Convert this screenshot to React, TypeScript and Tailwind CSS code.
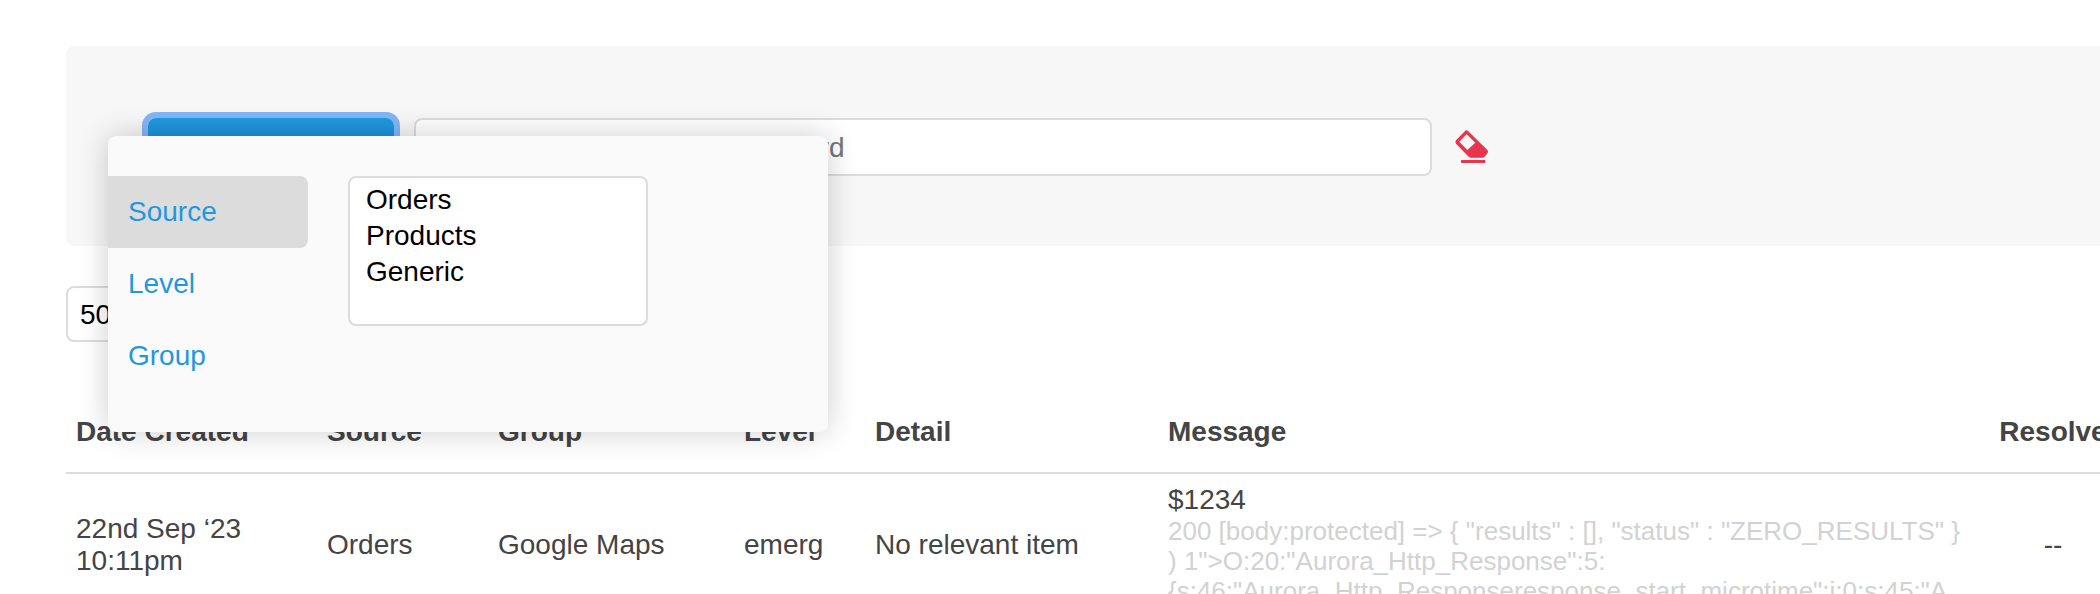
import { useState } from "react";
import clsx from "clsx";

type LogEntry = {
  id: number;
  date: string[];
  source: string;
  group: string;
  level: string;
  detail: string;
  title: string;
  body: string[];
  resolved: string;
};

const filters = [
  { name: "Source", options: ["Orders", "Products", "Generic"] },
  { name: "Level", options: ["emerg", "error", "info"] },
  { name: "Group", options: ["Google Maps"] },
];

const logs: LogEntry[] = [
  {
    id: 1,
    date: ["22nd Sep ‘23", "10:11pm"],
    source: "Orders",
    group: "Google Maps",
    level: "emerg",
    detail: "No relevant item",
    title: "$1234",
    body: [
      '200 [body:protected] => { "results" : [], "status" : "ZERO_RESULTS" }',
      ') 1">O:20:"Aurora_Http_Response":5:',
      '{s:46:"Aurora_Http_Responseresponse_start_microtime";i:0;s:45:"A',
    ],
    resolved: "--",
  },
];

const EraserIcon = () => (
  <svg viewBox="0 0 120 108" className="h-9 w-10" aria-hidden="true">
    <path
      fill="#e8344c"
      fillRule="evenodd"
      d="M39 6Q43 2 48 6L106 63Q110 67 107 72L98 83Q95 86 91 86H57Q53 86 50 83L12 44Q8 39 12 34ZM44 16L22 38L46 63L70 41Z"
    />
    <rect x="27" y="93" width="73" height="9" rx="2" fill="#e8344c" />
  </svg>
);

const FilterMenu = () => {
  const [active, setActive] = useState("Source");
  const current = filters.find((f) => f.name === active) ?? filters[0];

  return (
    <div className="absolute top-[90px] left-[42px] z-10 flex w-[720px] gap-10 rounded-lg bg-[#fafafa] py-10 shadow-[0_0_30px_rgba(0,0,0,0.2)]">
      <nav className="w-[200px]">
        {filters.map((f) => (
          <a
            key={f.name}
            href={`#${f.name.toLowerCase()}`}
            onClick={() => setActive(f.name)}
            className={clsx(
              "block rounded-r-lg px-5 py-5 leading-8 text-[#1f98e0]",
              f.name === active && "bg-[#dcdcdc]"
            )}
          >
            {f.name}
          </a>
        ))}
      </nav>
      <select
        multiple
        aria-label={current.name}
        className="h-[150px] w-[300px] overflow-hidden rounded-lg border-2 border-[#dcdcdc] bg-white px-4 py-1 text-black"
      >
        {current.options.map((option) => (
          <option key={option} className="h-9 pt-0.5">
            {option}
          </option>
        ))}
      </select>
    </div>
  );
};

const App = () => {
  const [search, setSearch] = useState("");

  return (
    <main className="h-screen overflow-hidden bg-white font-['Liberation_Sans',Arial,sans-serif] text-[28px] leading-8 text-[#444]">
      <div className="mt-[46px] -mr-[17px] ml-[66px]">
        <section className="relative rounded-lg bg-[#f7f7f7] pt-[72px] pb-[70px] pl-[82px]">
          <form
            className="flex max-w-[1344px] items-center gap-5"
            onSubmit={(e) => e.preventDefault()}
          >
            <button
              type="button"
              className="h-[58px] w-[246px] rounded-lg bg-linear-to-b from-[#2099e0] to-[#1a80c8] text-white ring-6 ring-[#82b6f8]"
            >
              Filter
            </button>
            <input
              type="text"
              aria-label="Search"
              value={search}
              onChange={(e) => setSearch(e.target.value)}
              placeholder="Search logs by detail or keyword"
              className="h-[58px] min-w-0 flex-1 rounded-lg border-2 border-[#dcdcdc] bg-white px-6 pt-0.5 placeholder:text-[#757575]"
            />
            <button
              type="button"
              aria-label="Clear"
              onClick={() => setSearch("")}
            >
              <EraserIcon />
            </button>
          </form>
          <FilterMenu />
        </section>

        <select
          aria-label="Rows per page"
          className="mt-10 block h-14 w-[120px] appearance-none rounded-lg border-2 border-[#dcdcdc] bg-white px-3 pt-0.5 text-black"
        >
          <option>50</option>
          <option>100</option>
        </select>

        <table className="mt-12 w-full table-fixed border-separate border-spacing-0 text-left">
          <colgroup>
            <col className="w-[251px]" />
            <col className="w-[171px]" />
            <col className="w-[246px]" />
            <col className="w-[131px]" />
            <col className="w-[293px]" />
            <col />
            <col className="w-[128px]" />
          </colgroup>
          <thead>
            <tr className="h-[84px] *:border-b-2 *:border-[#dcdcdc] *:px-[10px] *:pt-0.5">
              <th>Date Created</th>
              <th>Source</th>
              <th>Group</th>
              <th>Level</th>
              <th>Detail</th>
              <th>Message</th>
              <th className="text-center">Resolve</th>
            </tr>
          </thead>
          <tbody>
            {logs.map((log) => (
              <tr key={log.id} className="*:p-[10px]">
                <td>
                  {log.date.map((line) => (
                    <div key={line}>{line}</div>
                  ))}
                </td>
                <td>{log.source}</td>
                <td>{log.group}</td>
                <td>{log.level}</td>
                <td>{log.detail}</td>
                <td>
                  {log.title}
                  <div className="text-[26px] leading-[30px] text-[#d2d2d2]">
                    {log.body.map((line) => (
                      <div key={line}>{line}</div>
                    ))}
                  </div>
                </td>
                <td className="text-center">{log.resolved}</td>
              </tr>
            ))}
          </tbody>
        </table>
      </div>
    </main>
  );
};

export default App;
